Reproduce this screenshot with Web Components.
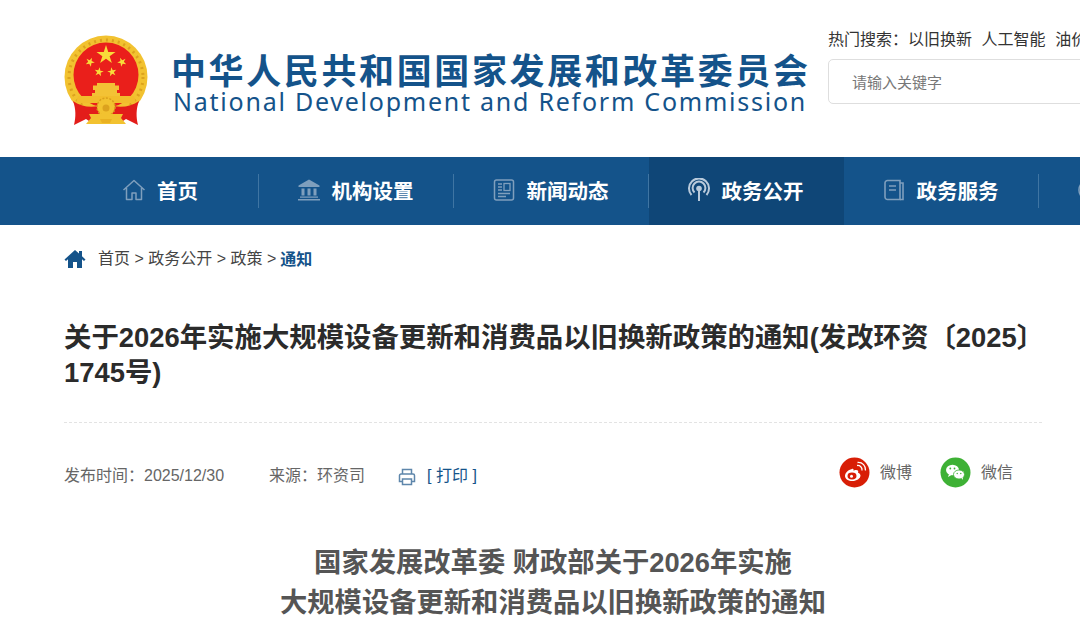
<!DOCTYPE html>
<html lang="zh">
<head>
<meta charset="utf-8">
<style>
  html, body { margin: 0; padding: 0; background: #fff; overflow: hidden; }
  body { width: 1080px; height: 640px; font-family: "Liberation Sans", "Noto Sans CJK SC", sans-serif; }
</style>
</head>
<body>
<site-header></site-header>
<main-nav>
  <nav-item icon="home">首页</nav-item>
  <nav-item icon="bank">机构设置</nav-item>
  <nav-item icon="news">新闻动态</nav-item>
  <nav-item icon="signal" active>政务公开</nav-item>
  <nav-item icon="book">政务服务</nav-item>
  <nav-item icon="globe" iconly></nav-item>
</main-nav>
<bread-crumb></bread-crumb>
<article-head></article-head>
<article-body></article-body>

<script>
const ICONS = {
  home: '<path d="M1.500 12 12 2.500 22.500 12M4.500 10v11.500h5.500v-6.500h4v6.500h5.500V10" fill="none" stroke="currentColor" stroke-width="1.500" stroke-linejoin="round"/>',
  bank: '<path d="M12 1.500 1.500 7.500v1.500h21V7.500zM1 21h22v1.600H1zM3 18.500h18v1.300H3z" fill="currentColor"/><path d="M4.500 10.500h3v7h-3zM10.500 10.500h3v7h-3zM16.500 10.500h3v7h-3z" fill="currentColor"/>',
  news: '<rect x="2.500" y="2" width="19" height="20" rx="2" fill="none" stroke="currentColor" stroke-width="1.500"/><path d="M6 6h4M6 9h4M6 12h4" stroke="currentColor" stroke-width="1.300"/><rect x="12" y="5.500" width="6" height="7" fill="none" stroke="currentColor" stroke-width="1.300"/><path d="M6 15.500h12M6 18.500h8" stroke="currentColor" stroke-width="1.300"/>',
  signal: '<path d="M4.500 17a10 10 0 1 1 15 0M7.500 14.500a6.400 6.400 0 1 1 9 0" fill="none" stroke="currentColor" stroke-width="2"/><circle cx="12" cy="10.500" r="2.800" fill="currentColor"/><path d="M12 11v12" stroke="currentColor" stroke-width="2"/>',
  book: '<path d="M3 5a2.500 2.500 0 0 1 2.500-2.500H18V21.500H5.500A2.500 2.500 0 0 1 3 19z" fill="none" stroke="currentColor" stroke-width="1.600"/><path d="M18 5h3v16.500h-3" fill="none" stroke="currentColor" stroke-width="1.600"/><path d="M7 8h7M7 12h7" stroke="currentColor" stroke-width="1.500"/>',
  globe: '<circle cx="12" cy="12" r="10" fill="none" stroke="currentColor" stroke-width="1.600"/>'
};

// five pointed star, tilted by rot degrees
function star(cx, cy, r, rot) {
  const pts = [];
  for (let i = 0; i < 10; i++) {
    const rad = i % 2 ? r * 0.382 : r;
    const a = (rot - 90 + i * 36) * Math.PI / 180;
    pts.push((cx + rad * Math.cos(a)).toFixed(2) + ',' + (cy + rad * Math.sin(a)).toFixed(2));
  }
  return `<polygon points="${pts.join(' ')}"/>`;
}

class SiteHeader extends HTMLElement {
  constructor() {
    super();
    this.attachShadow({ mode: 'open' });
    this.shadowRoot.innerHTML = `
<style>
  :host { display: flex; height: 157px; box-sizing: border-box; padding: 29px 0 0 64px; overflow: hidden; }
  .emblem { width: 84px; height: 91px; margin-top: 6px; flex: none; }
  .names { margin-left: 23px; width: 657px; flex: none; padding-top: 18px; }
  .cn { font: 700 35px/44px "Noto Sans CJK SC", sans-serif; letter-spacing: 2.62px; color: #14538a; white-space: nowrap; }
  .en { font: 400 25px/28px "Noto Sans", "Liberation Sans", sans-serif; letter-spacing: 1.76px; color: #14538a; white-space: nowrap; margin: -4px 0 0 2px; }
  .side { width: 252px; flex: none; margin-top: -2px; }
  .hot { font: 400 16px/20px "Noto Sans CJK SC", sans-serif; color: #333; white-space: nowrap; margin-top: 1px; }
  .hot span { margin-right: 6px; }
  .box { width: 300px; height: 45px; margin-top: 11px; box-sizing: border-box; border: 1px solid #dedede; border-radius: 5px; padding-left: 23px; font: 400 15px/43px "Noto Sans CJK SC", sans-serif; color: #777; }
</style>
<svg class="emblem" viewBox="0 0 84 91">
  <circle cx="42" cy="42" r="41.500" fill="#f2c230"/>
  <circle cx="42" cy="42" r="37" fill="none" stroke="#dca21e" stroke-width="3" stroke-dasharray="2 4"/>
  <circle cx="42" cy="40" r="32.500" fill="#ea1f1b"/>
  <g fill="#f8dc3a">
    ${star(42, 20, 10, 0)}
    ${star(26, 27, 4.800, 25)}
    ${star(58, 27, 4.800, -25)}
    ${star(35, 37, 4.800, 10)}
    ${star(48, 37, 4.800, -10)}
  </g>
  <path d="M33 48h18v2.500h4V55h-2v3h3v4H28v-4h3v-3h-2v-4.500h4z" fill="#f3c235"/>
  <path d="M14 61h56l2 7H12z" fill="#f2bd2c"/>
  <path d="M9 66c7 5 16 7 26 5l1 11-8 6-6-4-12 6c2-8 2-16-1-24z" fill="#e31d1a"/>
  <path d="M75 66c-7 5-16 7-26 5l-1 11 8 6 6-4 12 6c-2-8-2-16 1-24z" fill="#e31d1a"/>
  <circle cx="42" cy="72" r="9" fill="#f2c230" stroke="#d99e1c" stroke-width="1.500" stroke-dasharray="2 1.500"/>
  <circle cx="42" cy="73" r="3.500" fill="#dca21e"/>
  <path d="M25 79h34l-2 4 5 6H22l5-6z" fill="#f2c230"/>
  <path d="M36 84h12l-2 4h-8z" fill="#e9b122"/>
</svg>
<div class="names">
  <div class="cn">中华人民共和国国家发展和改革委员会</div>
  <div class="en">National Development and Reform Commission</div>
</div>
<div class="side">
  <div class="hot"><span>热门搜索：以旧换新</span> <span>人工智能</span> <span>油价</span></div>
  <div class="box">请输入关键字</div>
</div>`;
  }
}

class MainNav extends HTMLElement {
  constructor() {
    super();
    this.attachShadow({ mode: 'open' });
    this.shadowRoot.innerHTML = `
<style>
  :host { display: flex; height: 68px; padding-left: 64px; background: #14538a; overflow: hidden; }
</style>
<slot></slot>`;
  }
}

class NavItem extends HTMLElement {
  constructor() {
    super();
    this.attachShadow({ mode: 'open' });
    const icon = ICONS[this.getAttribute('icon')] || '';
    this.shadowRoot.innerHTML = `
<style>
  :host { display: flex; align-items: center; justify-content: center; gap: 11px; flex: 0 0 195px; width: 195px; height: 68px; box-sizing: border-box; padding: 0 3px 2px 0; position: relative; color: #fff; font: 700 20.500px/66px "Noto Sans CJK SC", sans-serif; white-space: nowrap; }
  :host([active]) { background: #0f4677; }
  :host([iconly]) { justify-content: flex-start; padding-left: 38px; }
  :host::after { content: ""; position: absolute; right: 0; top: 17px; width: 1px; height: 34px; background: #3f75a3; }
  :host([active])::after { display: none; }
  svg { width: 24px; height: 24px; flex: none; color: #7f9fbd; }
  :host([active]) svg { color: #b9cadb; }
</style>
<svg viewBox="0 0 24 24">${icon}</svg><slot></slot>`;
  }
}

class BreadCrumb extends HTMLElement {
  constructor() {
    super();
    this.attachShadow({ mode: 'open' });
    this.shadowRoot.innerHTML = `
<style>
  :host { display: flex; align-items: center; height: 24px; margin-top: 22px; padding-left: 64px; font: 400 16px/24px "Liberation Sans", "Noto Sans CJK SC", sans-serif; color: #444; white-space: nowrap; }
  svg { width: 22px; height: 20px; margin-right: 12px; flex: none; }
  b { color: #14538a; font-family: "Noto Sans CJK SC", sans-serif; font-weight: 700; margin: -2px 0 0 4px; }
</style>
<svg viewBox="0 0 22 20"><path d="M11 1 0.500 10.500 2 12l2-1.800V19h5v-6h4v6h5v-8.800L20 12l1.500-1.500L18 7.300V2h-3v2.600z" fill="#14538a"/></svg>
<span>首页 &gt; 政务公开 &gt; 政策 &gt;</span><b>通知</b>`;
  }
}

class ArticleHead extends HTMLElement {
  constructor() {
    super();
    this.attachShadow({ mode: 'open' });
    this.shadowRoot.innerHTML = `
<style>
  :host { display: block; margin: 0 38px 0 64px; padding-top: 49px; }
  h1 { margin: 0; padding-bottom: 32px; border-bottom: 1px dashed #e3e3e3; font: 700 27.400px/35px "Liberation Sans", "Noto Sans CJK SC", sans-serif; color: #2b2b2b; }
  .meta { display: flex; align-items: center; height: 30px; margin-top: 38px; font: 400 16px/30px "Liberation Sans", "Noto Sans CJK SC", sans-serif; color: #666; white-space: nowrap; }
  .src { margin-left: 45px; }
  .print { display: flex; align-items: center; margin-left: 33px; color: #14538a; }
  .print svg { width: 18px; height: 18px; margin-right: 11px; margin-top: 2px; }
  .share { display: flex; align-items: center; margin: -7px 29px 0 auto; }
  .share span { margin-left: 10px; }
  .share svg { width: 31px; height: 31px; }
  .wx { margin-left: 28px; }
</style>
<h1>关于2026年实施大规模设备更新和消费品以旧换新政策的通知(发改环资〔2025〕1745号)</h1>
<div class="meta">
  <span>发布时间：2025/12/30</span>
  <span class="src">来源：环资司</span>
  <span class="print">
    <svg viewBox="0 0 18 18"><path d="M4.500 6V1.500h9V6M4.500 13.500H1.500V7.500a1.500 1.500 0 0 1 1.500-1.500h12a1.500 1.500 0 0 1 1.500 1.500v6h-3" fill="none" stroke="#5e86ab" stroke-width="1.500"/><rect x="4.500" y="11" width="9" height="5.500" fill="none" stroke="#5e86ab" stroke-width="1.500"/></svg>
    [ 打印 ]
  </span>
  <div class="share">
    <svg viewBox="0 0 31 31"><circle cx="15.500" cy="15.500" r="15" fill="#d81e06"/><path d="M13 12c-4 1-7 4-7 7 0 3 3.500 5 7.500 5s8-2.500 8-5.500c0-1.800-1.800-2.500-2.500-2.800.6-1.500.3-2.700-2-2.700-1 0-2 .4-2.500.7.300-1.500-.3-2.400-1.500-1.700z" fill="#fff"/><ellipse cx="13" cy="19" rx="4.500" ry="3.400" fill="#d81e06"/><circle cx="12.500" cy="19.300" r="1.500" fill="#fff"/><path d="M18 8.500c3-.5 5.500 2 5 5M18.500 5.500c5-.5 8.500 3.500 8 8" fill="none" stroke="#fff" stroke-width="1.300"/></svg>
    <span>微博</span>
    <svg class="wx" viewBox="0 0 31 31"><circle cx="15.500" cy="15.500" r="15" fill="#3eb135"/><ellipse cx="12.500" cy="13" rx="6.500" ry="5.300" fill="#fff"/><path d="M9 17l-1 3 3.500-2z" fill="#fff"/><ellipse cx="19" cy="17.500" rx="5.500" ry="4.500" fill="#fff" stroke="#3eb135" stroke-width=".8"/><path d="M21.500 21l1.500 2-.3-3z" fill="#fff"/><circle cx="10.300" cy="11.500" r=".9" fill="#3eb135"/><circle cx="14.500" cy="11.500" r=".9" fill="#3eb135"/><circle cx="17.200" cy="16.500" r=".7" fill="#3eb135"/><circle cx="20.800" cy="16.500" r=".7" fill="#3eb135"/></svg>
    <span>微信</span>
  </div>
</div>`;
  }
}

class ArticleBody extends HTMLElement {
  constructor() {
    super();
    this.attachShadow({ mode: 'open' });
    this.shadowRoot.innerHTML = `
<style>
  :host { display: block; margin: 0 38px 0 64px; padding-top: 52px; text-align: center; }
  p { margin: 0; font: 700 27.300px/40px "Liberation Sans", "Noto Sans CJK SC", sans-serif; color: #555; }
</style>
<p>国家发展改革委 财政部关于2026年实施</p>
<p>大规模设备更新和消费品以旧换新政策的通知</p>`;
  }
}

customElements.define('site-header', SiteHeader);
customElements.define('main-nav', MainNav);
customElements.define('nav-item', NavItem);
customElements.define('bread-crumb', BreadCrumb);
customElements.define('article-head', ArticleHead);
customElements.define('article-body', ArticleBody);
</script>
</body>
</html>
